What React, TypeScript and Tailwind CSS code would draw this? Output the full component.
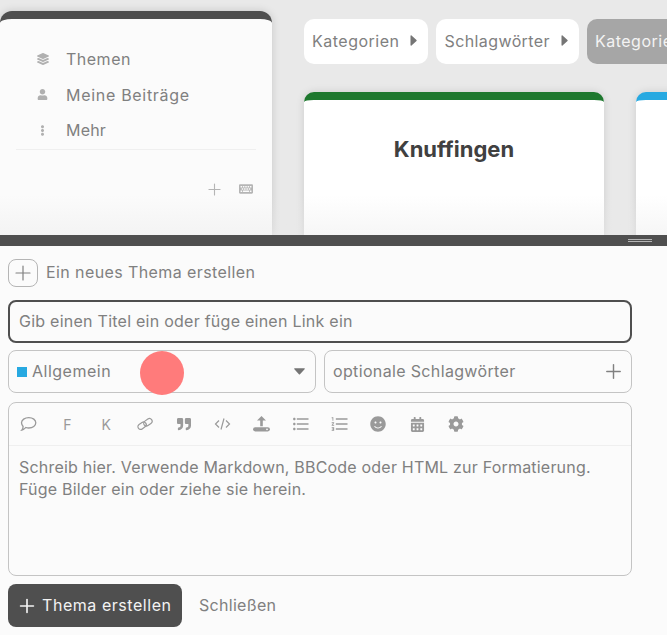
import { Plus } from 'lucide-react';
import {
  FaCalendarAlt,
  FaCog,
  FaEllipsisV,
  FaKeyboard,
  FaLayerGroup,
  FaQuoteRight,
  FaSmile,
  FaUser,
} from 'react-icons/fa';
import { MdFormatListBulleted, MdFormatListNumbered } from 'react-icons/md';

const font = "font-['Inter','Noto_Sans',sans-serif]";

const BubbleIcon = () => (
  <svg width="17" height="16" viewBox="0 0 17 16" fill="none" stroke="currentColor" strokeWidth="1.3">
    <path d="M8.800 1.600c4 0 7 2.300 7 5.200s-3 5.200-7 5.200c-1.100 0-2.100-.2-3-.5-1 .9-2.300 2.300-4 2.600.7-.8 1.300-2.100 1.300-3.600C2.300 9.500 1.500 8.200 1.500 6.800c0-2.900 3.300-5.200 7.300-5.200z" />
  </svg>
);

const LinkIcon = () => (
  <svg width="16" height="14" viewBox="0 0 16 14" fill="none" stroke="currentColor" strokeWidth="1.200">
    <rect x="0.600" y="6" width="9" height="5.400" rx="2.700" transform="rotate(-35 5 8.700)" />
    <rect x="6.400" y="2.600" width="9" height="5.400" rx="2.700" transform="rotate(-35 10.900 5.300)" />
  </svg>
);

const CodeIcon = () => (
  <svg width="17" height="14" viewBox="0 0 17 14" fill="none" stroke="currentColor" strokeWidth="1.2">
    <path d="M5 3.500 1.500 7 5 10.500M12 3.500 15.500 7 12 10.500M10 1.500 7 12.500" />
  </svg>
);

const UploadIcon = () => (
  <svg width="17" height="16" viewBox="0 0 17 16" fill="currentColor">
    <path d="M8.500 0 13 4.600h-3.200v5.600H7.200V4.600H4z" />
    <path d="M2.200 11.200h12.600a2.100 2.100 0 0 1 0 4.300H2.200a2.100 2.100 0 0 1 0-4.300z" />
    <circle cx="14" cy="13.300" r="0.900" fill="#fbfbfb" />
  </svg>
);

const CaretRight = () => (
  <svg width="7" height="11" viewBox="0 0 7 11" fill="currentColor" className="text-[#757575] shrink-0">
    <path d="M0.500 0.800c0-.5.600-.8 1-.4l5 4.500c.3.300.3.800 0 1.100l-5 4.500c-.4.400-1 .1-1-.4z" />
  </svg>
);

const CaretDown = () => (
  <svg width="11" height="7" viewBox="0 0 11 7" fill="currentColor" className="ml-auto text-[#757575] shrink-0">
    <path d="M0.800 0.300h9.400c.5 0 .8.600.4 1L6 6.300c-.3.300-.8.300-1.100 0L.4 1.300c-.4-.4-.1-1 .4-1z" />
  </svg>
);

const sideItems = [
  { label: 'Themen', track: 'tracking-[0.5px]', icon: <FaLayerGroup size={12} /> },
  { label: 'Meine Beiträge', track: 'tracking-[0.7px]', icon: <FaUser size={11} /> },
  { label: 'Mehr', track: 'tracking-[0.2px]', icon: <FaEllipsisV size={11} /> },
];

const toolbar = [
  { key: 'bubble', el: <BubbleIcon /> },
  { key: 'bold', el: <span className="text-[14px] text-[#9a9a9a]">F</span> },
  { key: 'italic', el: <span className="text-[14px] text-[#9a9a9a]">K</span> },
  { key: 'link', el: <LinkIcon /> },
  { key: 'quote', el: <FaQuoteRight size={14} /> },
  { key: 'code', el: <CodeIcon /> },
  { key: 'upload', el: <UploadIcon /> },
  { key: 'ul', el: <MdFormatListBulleted size={20} /> },
  { key: 'ol', el: <MdFormatListNumbered size={20} /> },
  { key: 'emoji', el: <FaSmile size={16} /> },
  { key: 'date', el: <FaCalendarAlt size={15} /> },
  { key: 'cog', el: <FaCog size={16} /> },
];

const Sidebar = () => (
  <aside className="w-[272px] h-[224px] mt-[11px] shrink-0 bg-[#fbfbfb] border-t-8 border-[#4f4f4f] rounded-t-[12px] shadow-[0_0_8px_rgba(0,0,0,0.15)] flex flex-col">
    <ul className="mx-4 pt-[22.500px] pb-[0.500px] border-b border-[#efefef] flex flex-col">
      {sideItems.map((item) => (
        <li key={item.label} className={`flex items-center h-[35.500px] text-[16px] text-[#808080] ${item.track}`}>
          <span className="w-[21px] ml-[16px] mr-[13px] flex justify-center text-[#b0b0b0]">{item.icon}</span>
          <span>{item.label}</span>
        </li>
      ))}
    </ul>
    <div className="flex justify-end items-center gap-[15px] mt-[30px] pr-[19px] text-[#b5b5b5]">
      <Plus size={19} strokeWidth={1.4} />
      <FaKeyboard size={14} />
    </div>
  </aside>
);

const Pill = ({ label, track, active }: { label: string; track: string; active?: boolean }) => (
  <div
    className={`h-[45px] pb-[2px] pl-2 pr-[11px] rounded-[10px] shrink-0 flex items-center gap-[11px] text-[16px] ${track} ${
      active ? 'bg-[#a6a6a6] text-[#f3f3f3]' : 'bg-white text-[#808080]'
    }`}
  >
    <span>{label}</span>
    {!active && <CaretRight />}
  </div>
);

const TopArea = () => (
  <div className="relative h-[235px] shrink-0 bg-[#e9e9e9] flex overflow-hidden">
    <Sidebar />
    <div className="pl-8 pt-[19px] flex flex-col gap-[28px] min-w-0">
      <div className="flex gap-2">
        <Pill label="Kategorien" track="tracking-[0.5px]" />
        <Pill label="Schlagwörter" track="tracking-[0.4px]" />
        <Pill label="Kategorien" track="tracking-[0.5px]" active />
      </div>
      <div className="flex gap-8">
        <div className="w-[300px] h-[200px] shrink-0 bg-white border-t-8 border-[#1e782e] rounded-t-[10px] shadow-[0_0_8px_rgba(0,0,0,0.12)] pt-[37px] text-center text-[22px] leading-[24px] font-bold text-[#404040]">
          Knuffingen
        </div>
        <div className="w-[300px] h-[200px] shrink-0 bg-white border-t-8 border-[#27a9e1] rounded-t-[10px] shadow-[0_0_8px_rgba(0,0,0,0.12)]" />
      </div>
    </div>
    <div className="absolute inset-x-0 bottom-0 h-[40px] bg-gradient-to-b from-transparent to-[#e9e9e9]/40" />
  </div>
);

const Composer = () => (
  <div className="flex-1 flex flex-col bg-[#fbfbfb] text-[#808080]">
    <div className="h-[11px] shrink-0 bg-[#4f4f4f] flex justify-end items-center pr-[15px]">
      <div className="w-[24px] h-[3px] border-y border-[#b5b5b5]" />
    </div>
    <div className="flex-1 flex flex-col px-2 pt-[13px]">
      <div className="flex items-center gap-2 h-[28px] text-[16px] tracking-[0.4px]">
        <span className="w-[30px] h-[28px] border border-[#b5b5b5] rounded-[8px] flex items-center justify-center">
          <Plus size={24} strokeWidth={1.2} />
        </span>
        <span className="pb-[2px]">Ein neues Thema erstellen</span>
      </div>
      <div className="mt-[13px] w-[624px] h-[43px] pb-[2px] border-2 border-[#4f4f4f] rounded-[8px] flex items-center px-[9px] text-[16px] tracking-[0.25px]">
        Gib einen Titel ein oder füge einen Link ein
      </div>
      <div className="mt-[7px] w-[624px] flex gap-2 text-[16px]">
        <div className="w-[308px] h-[43px] border border-[#c4c4c4] rounded-[8px] flex items-center pl-2 pr-[10px] tracking-[0.5px]">
          <span className="w-[10px] h-[10px] bg-[#27a9e1] mr-[5px] shrink-0" />
          <span className="pb-[2px]">Allgemein</span>
          <CaretDown />
        </div>
        <div className="w-[308px] h-[43px] border border-[#c4c4c4] rounded-[8px] flex items-center pl-2 pr-[6px] tracking-[0.35px]">
          <span className="pb-[2px]">optionale Schlagwörter</span>
          <Plus size={23} strokeWidth={1.5} className="ml-auto" />
        </div>
      </div>
      <div className="mt-[9px] w-[624px] h-[174px] border border-[#c4c4c4] rounded-[8px] flex flex-col">
        <div className="h-[43px] shrink-0 border-b border-[#efefef] flex items-center text-[#9a9a9a]">
          {toolbar.map((t) => (
            <span key={t.key} className="w-[38.900px] flex justify-center items-center shrink-0">
              {t.el}
            </span>
          ))}
        </div>
        <p className="px-[10px] pt-[10px] text-[16px] leading-[22px] tracking-[0.2px]">
          Schreib hier. Verwende Markdown, BBCode oder HTML zur Formatierung.
          <br />
          Füge Bilder ein oder ziehe sie herein.
        </p>
      </div>
      <div className="mt-[8px] flex items-center">
        <button className="w-[174px] h-[43px] bg-[#4f4f4f] rounded-[8px] text-[#f3f3f3] flex items-center pl-[8px] gap-[4px] text-[16px] tracking-[0.55px]">
          <Plus size={22} strokeWidth={1.8} />
          <span className="pb-[2px]">Thema erstellen</span>
        </button>
        <span className="ml-[17px] pb-[2px] text-[16px] tracking-[0.3px]">Schließen</span>
      </div>
    </div>
  </div>
);

export default function App() {
  return (
    <div className={`relative w-[667px] h-[635px] flex flex-col overflow-hidden ${font}`}>
      <TopArea />
      <Composer />
      <div className="absolute left-[140px] top-[351px] w-[44px] h-[44px] rounded-full bg-[#ff7b7b]" />
    </div>
  );
}
